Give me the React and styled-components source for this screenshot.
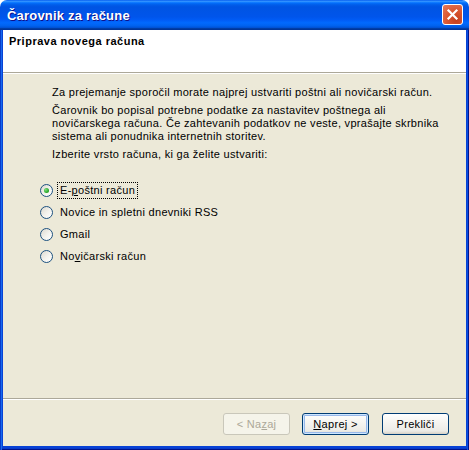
import React from "react";
import styled, { createGlobalStyle } from "styled-components";

const GlobalStyle = createGlobalStyle`
  html, body {
    margin: 0;
    padding: 0;
    background: #ffffff;
  }
  body {
    font-family: "Liberation Sans", Arial, sans-serif;
    font-size: 11px;
    letter-spacing: 0.3px;
    color: #000;
  }
`;

const Window = styled.div`
  width: 469px;
  height: 450px;
  display: flex;
  flex-direction: column;
  box-sizing: border-box;
`;

const TitleBar = styled.div`
  height: 30px;
  flex: none;
  display: flex;
  align-items: center;
  justify-content: space-between;
  padding: 0 6px 0 7px;
  box-sizing: border-box;
  border-radius: 7px 7px 0 0;
  background: linear-gradient(
    to bottom,
    #0058ee 0%,
    #3593ff 4%,
    #288eff 6%,
    #127dff 8%,
    #036ffc 10%,
    #0262ee 14%,
    #0057e5 20%,
    #0054e3 24%,
    #0055eb 56%,
    #005bf5 66%,
    #026afe 76%,
    #0062ef 86%,
    #0052d6 92%,
    #0040ab 94%,
    #003092 100%
  );
`;

const Title = styled.span`
  color: #fff;
  font-weight: bold;
  font-size: 13px;
  letter-spacing: 0.2px;
  text-shadow: 1px 1px 0 #0f1089;
`;

const CloseButton = styled.div`
  width: 21px;
  height: 21px;
  box-sizing: border-box;
  border: 1px solid #fff;
  border-radius: 3px;
  background: radial-gradient(circle at 70% 80%, #c4401f 0%, #d9552f 45%, #e67a5b 100%);
  display: flex;
  align-items: center;
  justify-content: center;
  margin-top: -1px;
`;

const Frame = styled.div`
  flex: 1;
  display: flex;
  flex-direction: column;
  padding: 0 3px 4px 3px;
  background: #0842d6;
  box-shadow: inset 1px 0 #0a3bc8, inset 2px 0 #166aee, inset -1px 0 #00138c,
    inset -2px 0 #0a50e0, inset 0 -1px #00138c, inset 0 -2px #0a3bc8;
`;

const Client = styled.div`
  flex: 1;
  display: flex;
  flex-direction: column;
  background: #ece9d8;
`;

const Header = styled.div`
  height: 42px;
  box-sizing: border-box;
  background: #fff;
  padding: 5px 6px 0;
  font-weight: bold;
  letter-spacing: 0.5px;
  line-height: 13px;
`;

const Separator = styled.div`
  height: 0;
  border-top: 1px solid #aca899;
  border-bottom: 1px solid #fff;
`;

const Content = styled.div`
  flex: 1;
  padding: 12px 10px 0 49px;
`;

const Para = styled.p`
  margin: 0 0 5px;
  line-height: 13px;
  white-space: nowrap;
`;

const Options = styled.div`
  display: flex;
  flex-direction: column;
  margin: 18px 0 0 -12px;
`;

const Option = styled.label`
  display: flex;
  align-items: center;
  height: 22px;
  gap: 4px;
`;

const Radio = styled.span`
  width: 13px;
  height: 13px;
  box-sizing: border-box;
  border-radius: 50%;
  border: 1px solid #1c5180;
  background: linear-gradient(135deg, #dcd9cf 0%, #f4f3ee 55%, #ffffff 100%);
  display: flex;
  align-items: center;
  justify-content: center;
  flex: none;

  &::after {
    content: "";
    display: ${(p) => (p.$checked ? "block" : "none")};
    width: 5px;
    height: 5px;
    border-radius: 50%;
    background: radial-gradient(circle at 35% 35%, #7ee07e 0%, #21a121 70%, #1a8a1a 100%);
  }
`;

const OptionText = styled.span`
  padding: 1px 2px;
  line-height: 13px;
  border: 1px ${(p) => (p.$focused ? "dotted #000" : "solid transparent")};
`;

const Key = styled.span`
  text-decoration: underline;
`;

const Footer = styled.div`
  height: 46px;
  box-sizing: border-box;
  display: flex;
  justify-content: flex-end;
  align-items: flex-start;
  padding: 13px 17px 0 0;
  gap: 12px;
`;

const Button = styled.button`
  width: 67px;
  height: 22px;
  box-sizing: border-box;
  font-family: "Liberation Sans", Arial, sans-serif;
  font-size: 11px;
  letter-spacing: 0.3px;
  padding: 0;
  border-radius: 3px;
  border: 1px solid ${(p) => (p.disabled ? "#c9c7ba" : "#003c74")};
  color: ${(p) => (p.disabled ? "#aca899" : "#000")};
  background: ${(p) =>
    p.disabled
      ? "#f5f4ea"
      : "linear-gradient(to bottom, #ffffff 0%, #f6f5f1 40%, #ecebe6 85%, #d6d0c5 100%)"};
  box-shadow: ${(p) =>
    p.$default ? "inset 0 0 0 1px #cee7ff, inset 0 0 0 2px #98b8ea" : "none"};
  margin-left: ${(p) => (p.$gapExtra ? "1px" : "0")};
`;

export default function App() {
  return (
    <>
      <GlobalStyle />
      <Window>
        <TitleBar>
          <Title>Čarovnik za račune</Title>
          <CloseButton>
            <svg width="13" height="13" viewBox="0 0 13 13">
              <path d="M2.5 2.5 L10.5 10.5 M10.5 2.5 L2.5 10.5" stroke="#fff" strokeWidth="2.2" strokeLinecap="square" />
            </svg>
          </CloseButton>
        </TitleBar>
        <Frame>
          <Client>
            <Header>Priprava novega računa</Header>
            <Separator />
            <Content>
              <Para>Za prejemanje sporočil morate najprej ustvariti poštni ali novičarski račun.</Para>
              <Para>
                Čarovnik bo popisal potrebne podatke za nastavitev poštnega ali
                <br />
                novičarskega računa. Če zahtevanih podatkov ne veste, vprašajte skrbnika
                <br />
                sistema ali ponudnika internetnih storitev.
              </Para>
              <Para>Izberite vrsto računa, ki ga želite ustvariti:</Para>
              <Options>
                <Option>
                  <Radio $checked />
                  <OptionText $focused>
                    E-<Key>p</Key>oštni račun
                  </OptionText>
                </Option>
                <Option>
                  <Radio />
                  <OptionText>Novice in spletni dnevniki RSS</OptionText>
                </Option>
                <Option>
                  <Radio />
                  <OptionText>Gmail</OptionText>
                </Option>
                <Option>
                  <Radio />
                  <OptionText>
                    No<Key>v</Key>ičarski račun
                  </OptionText>
                </Option>
              </Options>
            </Content>
            <Separator />
            <Footer>
              <Button disabled>
                &lt; Na<Key>z</Key>aj
              </Button>
              <Button $default>
                <Key>N</Key>aprej &gt;
              </Button>
              <Button $gapExtra>Prekliči</Button>
            </Footer>
          </Client>
        </Frame>
      </Window>
    </>
  );
}
